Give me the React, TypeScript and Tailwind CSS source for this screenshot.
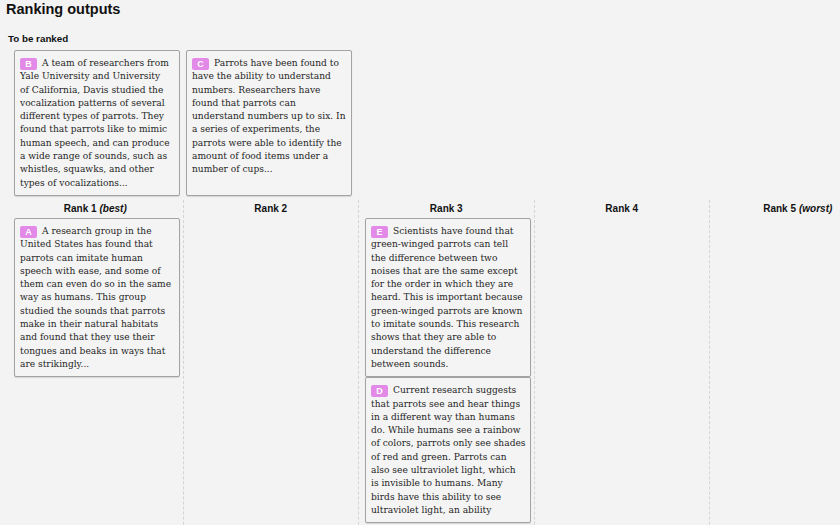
import React from "react";

type Item = { id: string; lines: string[] };

const B: Item = {
  id: "B",
  lines: [
    "A team of researchers from",
    "Yale University and University",
    "of California, Davis studied the",
    "vocalization patterns of several",
    "different types of parrots. They",
    "found that parrots like to mimic",
    "human speech, and can produce",
    "a wide range of sounds, such as",
    "whistles, squawks, and other",
    "types of vocalizations...",
  ],
};
const C: Item = {
  id: "C",
  lines: [
    "Parrots have been found to",
    "have the ability to understand",
    "numbers. Researchers have",
    "found that parrots can",
    "understand numbers up to six. In",
    "a series of experiments, the",
    "parrots were able to identify the",
    "amount of food items under a",
    "number of cups...",
  ],
};
const A: Item = {
  id: "A",
  lines: [
    "A research group in the",
    "United States has found that",
    "parrots can imitate human",
    "speech with ease, and some of",
    "them can even do so in the same",
    "way as humans. This group",
    "studied the sounds that parrots",
    "make in their natural habitats",
    "and found that they use their",
    "tongues and beaks in ways that",
    "are strikingly...",
  ],
};
const E: Item = {
  id: "E",
  lines: [
    "Scientists have found that",
    "green-winged parrots can tell",
    "the difference between two",
    "noises that are the same except",
    "for the order in which they are",
    "heard. This is important because",
    "green-winged parrots are known",
    "to imitate sounds. This research",
    "shows that they are able to",
    "understand the difference",
    "between sounds.",
  ],
};
const D: Item = {
  id: "D",
  lines: [
    "Current research suggests",
    "that parrots see and hear things",
    "in a different way than humans",
    "do. While humans see a rainbow",
    "of colors, parrots only see shades",
    "of red and green. Parrots can",
    "also see ultraviolet light, which",
    "is invisible to humans. Many",
    "birds have this ability to see",
    "ultraviolet light, an ability",
  ],
};

const serif = { fontFamily: '"DejaVu Serif", "Liberation Serif", serif' };

function Card({ item, className = "" }: { item: Item; className?: string }) {
  return (
    <div
      className={`w-[166px] shrink-0 border border-[#a3a3a3] rounded-[2px] bg-[#f4f4f4] shadow-[0_1px_1px_rgba(0,0,0,0.12)] pl-[5px] pr-[2px] pt-[6px] pb-[5px] text-[9.1px] leading-[13.3px] text-[#262626] whitespace-nowrap overflow-hidden ${className}`}
      style={serif}
    >
      {item.lines.map((l, i) => (
        <div key={i}>
          {i === 0 && (
            <span className="inline-block w-[17px] h-[12px] mr-[5px] rounded-[2px] bg-[#e38ae8] text-white text-[9px] leading-[12px] text-center font-bold align-[-1px] font-['Liberation_Sans',sans-serif]">
              {item.id}
            </span>
          )}
          {l}
        </div>
      ))}
    </div>
  );
}

function RankColumn({
  label,
  note,
  items,
  last,
}: {
  label: string;
  note?: string;
  items: Item[];
  last?: boolean;
}) {
  return (
    <div
      className={`w-[175.5px] shrink-0 flex flex-col ${
        last ? "" : "border-r border-dashed border-r-[#d4d4d4]"
      }`}
    >
      <div className="h-[18px] flex items-center justify-center text-[10px] font-bold text-[#111] font-['Liberation_Sans',sans-serif]">
        {label}
        {note && <span className="italic ml-[3px]">{note}</span>}
      </div>
      <div className="flex flex-col pl-[6px]">
        {items.map((it) => (
          <Card key={it.id} item={it} />
        ))}
      </div>
    </div>
  );
}

export default function App() {
  return (
    <div className="w-[840px] h-[525px] overflow-hidden bg-[#f3f3f3] font-['Liberation_Sans',sans-serif] text-[#111]">
      <div className="pl-[6px] pt-[0px] h-[18px] text-[14.5px] leading-[18px] font-bold">
        Ranking outputs
      </div>
      <div className="pl-[8px] mt-[14px] h-[13px] text-[9.8px] leading-[13px] font-bold">
        To be ranked
      </div>
      <div className="flex gap-[6px] pl-[14px] mt-[5px]">
        <Card item={B} />
        <Card item={C} />
      </div>
      <div className="flex pl-[8px] mt-[4px] h-[400px]">
        <RankColumn label="Rank 1" note="(best)" items={[A]} />
        <RankColumn label="Rank 2" items={[]} />
        <RankColumn label="Rank 3" items={[E, D]} />
        <RankColumn label="Rank 4" items={[]} />
        <RankColumn label="Rank 5" note="(worst)" items={[]} last />
      </div>
    </div>
  );
}
